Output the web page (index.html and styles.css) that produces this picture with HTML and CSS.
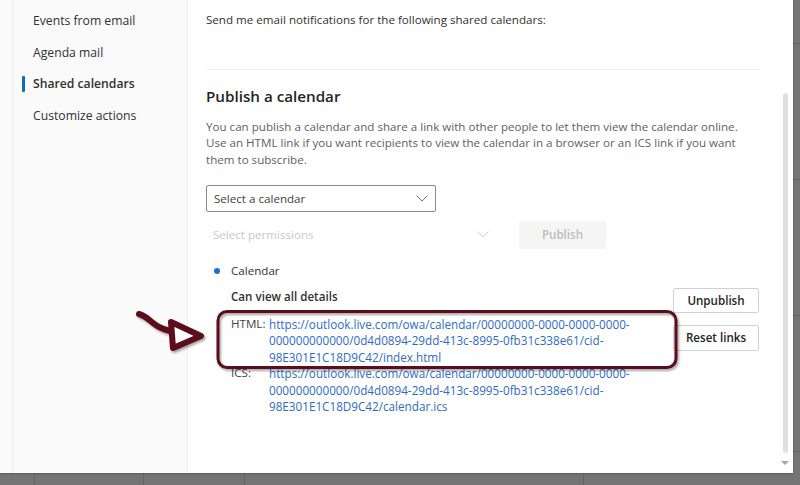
FILE: index.html
```html
<!DOCTYPE html>
<html lang="en">
<head>
<meta charset="utf-8">
<title>Shared calendars</title>
<link rel="stylesheet" href="styles.css">
</head>
<body>
<div class="backdrop">
  <div class="dialog">
    <nav class="nav">
      <div class="nav-inner">
        <div class="nav-item">Events from email</div>
        <div class="nav-item">Agenda mail</div>
        <div class="nav-item active">Shared calendars</div>
        <div class="nav-item">Customize actions</div>
      </div>
    </nav>
    <main class="content">
      <p class="intro">Send me email notifications for the following shared calendars:</p>
      <hr class="divider">
      <h2 class="heading">Publish a calendar</h2>
      <p class="desc">You can publish a calendar and share a link with other people to let them view the calendar online.<br>Use an HTML link if you want recipients to view the calendar in a browser or an ICS link if you want<br>them to subscribe.</p>
      <div class="select">
        <span>Select a calendar</span>
        <svg class="chev" width="12" height="7" viewBox="0 0 12 7"><path d="M0.5 0.5 L6 6 L11.5 0.5" fill="none" stroke="#707070" stroke-width="1"/></svg>
      </div>
      <div class="perm-row">
        <div class="perm">
          <span>Select permissions</span>
          <svg class="chev" width="12" height="7" viewBox="0 0 12 7"><path d="M0.5 0.5 L6 6 L11.5 0.5" fill="none" stroke="#cfcfcf" stroke-width="1"/></svg>
        </div>
        <div class="btn-disabled">Publish</div>
      </div>
      <div class="cal-row"><span class="dot"></span><span>Calendar</span></div>
      <div class="details">
        <div class="links">
          <div class="perm-title">Can view all details</div>
          <div class="link-row">
            <span class="lbl">HTML:</span>
            <a class="url">https://outlook.live.com/owa/calendar/00000000-0000-0000-0000-<br>000000000000/0d4d0894-29dd-413c-8995-0fb31c338e61/cid-<br>98E301E1C18D9C42/index.html</a>
          </div>
          <div class="link-row">
            <span class="lbl">ICS:</span>
            <a class="url">https://outlook.live.com/owa/calendar/00000000-0000-0000-0000-<br>000000000000/0d4d0894-29dd-413c-8995-0fb31c338e61/cid-<br>98E301E1C18D9C42/calendar.ics</a>
          </div>
        </div>
        <div class="actions">
          <div class="btn">Unpublish</div>
          <div class="btn btn-reset">Reset links</div>
        </div>
      </div>
    </main>
    <div class="scroll">
      <div class="track"></div>
      <div class="arrow-down"></div>
    </div>
    <svg class="annot" width="800" height="485" viewBox="0 0 800 485">
      <defs>
        <filter id="sh" x="-10%" y="-20%" width="120%" height="140%">
          <feDropShadow dx="1.5" dy="2" stdDeviation="1.2" flood-color="#000" flood-opacity="0.35"/>
        </filter>
      </defs>
      <g filter="url(#sh)" fill="none" stroke="#5b0d1c" stroke-linecap="round" stroke-linejoin="round">
        <rect x="218" y="311.5" width="458" height="56" rx="9" ry="9" stroke-width="3"/>
        <path d="M139 314 C147 316 151 323 159 327 C163 329 166 330 170 331" stroke-width="6"/>
        <path d="M171 322 L201 336 L173 348 Z" stroke-width="6" fill="#ffffff"/>
      </g>
    </svg>
  </div>
</div>
</body>
</html>
```
FILE: styles.css
```css
html, body {
  margin: 0;
  padding: 0;
}
body {
  width: 800px;
  height: 485px;
  overflow: hidden;
  font-family: "Open Sans", "Noto Sans", sans-serif;
  font-size: 11.6px;
  color: #323130;
}
.backdrop {
  width: 800px;
  height: 485px;
  background-color: #747474;
  background-image:
    linear-gradient(to right, transparent 34px, #646464 34px, #646464 35px, transparent 35px),
    linear-gradient(to right, transparent 143px, #646464 143px, #646464 144px, transparent 144px),
    repeating-linear-gradient(to right, transparent 0, transparent 244px, #646464 244px, #646464 245px, transparent 245px, transparent 339px),
    repeating-linear-gradient(to bottom, transparent 0, transparent 43px, #666 43px, #666 44px, transparent 44px, transparent 136px);
  position: relative;
}
.dialog {
  position: relative;
  width: 793px;
  height: 473px;
  background: #ffffff;
  display: flex;
  box-shadow: 0 1px 2px rgba(0,0,0,0.2);
}
.nav {
  flex: none;
  background: #fafafa;
  border-right: 1px solid #efefef;
  padding-left: 12px;
  box-sizing: border-box;
  width: 188px;
}
.nav-inner {
  height: 100%;
  border-left: 1px solid #ededed;
  padding-top: 5px;
  box-sizing: border-box;
}
.nav-item {
  height: 31.6px;
  line-height: 31.6px;
  padding-left: 20px;
  font-size: 12.2px;
  color: #323130;
  position: relative;
}
.nav-item.active {
  font-weight: 600;
}
.nav-item.active::before {
  content: "";
  position: absolute;
  left: 9px;
  top: 8px;
  width: 3px;
  height: 16px;
  border-radius: 1px;
  background: #0f6cbd;
}
.content {
  flex: 1;
  padding: 11px 0 0 18px;
  box-sizing: border-box;
  min-width: 0;
}
.intro {
  margin: 0;
  line-height: 18px;
  width: 554px;
}
.divider {
  border: 0;
  border-top: 1px solid #eeeeee;
  margin: 40px 0 0 0;
  width: 554px;
}
.heading {
  margin: 15px 0 0 0;
  font-size: 15.2px;
  font-weight: 600;
  line-height: 22px;
  color: #242424;
}
.desc {
  margin: 12px 0 0 0;
  line-height: 16.3px;
  color: #616161;
  white-space: nowrap;
}
.select {
  margin-top: 17px;
  width: 230px;
  height: 27px;
  box-sizing: border-box;
  border: 1px solid #8a8a8a;
  border-radius: 2px;
  display: flex;
  align-items: center;
  justify-content: space-between;
  padding: 0 7px 0 7px;
  color: #424242;
}
.perm-row {
  display: flex;
  align-items: center;
  margin-top: 9px;
  gap: 24px;
}
.perm {
  width: 289px;
  height: 28px;
  display: flex;
  align-items: center;
  justify-content: space-between;
  padding: 0 6px 0 7px;
  box-sizing: border-box;
  color: #c8c8c8;
}
.btn-disabled {
  width: 87px;
  height: 28px;
  line-height: 28px;
  text-align: center;
  background: #f5f5f5;
  color: #bdbdbd;
  font-weight: 600;
  border-radius: 2px;
}
.cal-row {
  display: flex;
  align-items: center;
  margin-top: 13px;
  height: 18px;
  padding-left: 8px;
}
.dot {
  width: 6px;
  height: 6px;
  border-radius: 50%;
  background: #1d6fd6;
  margin-right: 11px;
}
.details {
  display: flex;
  justify-content: space-between;
  align-items: flex-start;
  width: 553px;
  margin-top: 8px;
}
.links {
  padding-left: 25px;
}
.perm-title {
  font-weight: 600;
  line-height: 18px;
  color: #323130;
}
.link-row {
  display: flex;
  margin-top: 10px;
  line-height: 16.4px;
}
.link-row + .link-row {
  margin-top: 0;
}
.lbl {
  width: 38px;
  flex: none;
  color: #424242;
}
.url {
  color: #2e6bc8;
  white-space: nowrap;
  font-size: 11.7px;
}
.actions {
  display: flex;
  flex-direction: column;
  gap: 12px;
}
.btn {
  width: 86px;
  height: 25px;
  box-sizing: border-box;
  border: 1px solid #d1d1d1;
  border-radius: 2px;
  display: flex;
  align-items: center;
  justify-content: center;
  font-weight: 600;
  color: #242424;
  background: #fff;
}
.btn-reset {
  height: 26px;
}
.scroll {
  width: 14px;
  flex: none;
  position: relative;
}
.track {
  position: absolute;
  left: 4px;
  top: 93px;
  width: 5px;
  height: 360px;
  border-radius: 3px;
  background: #e0e0e0;
}
.arrow-down {
  position: absolute;
  left: 2px;
  top: 461px;
  width: 0;
  height: 0;
  border-left: 4px solid transparent;
  border-right: 4px solid transparent;
  border-top: 4px solid #a6a6a6;
}
.annot {
  position: absolute;
  left: 0;
  top: 0;
  pointer-events: none;
}
```
